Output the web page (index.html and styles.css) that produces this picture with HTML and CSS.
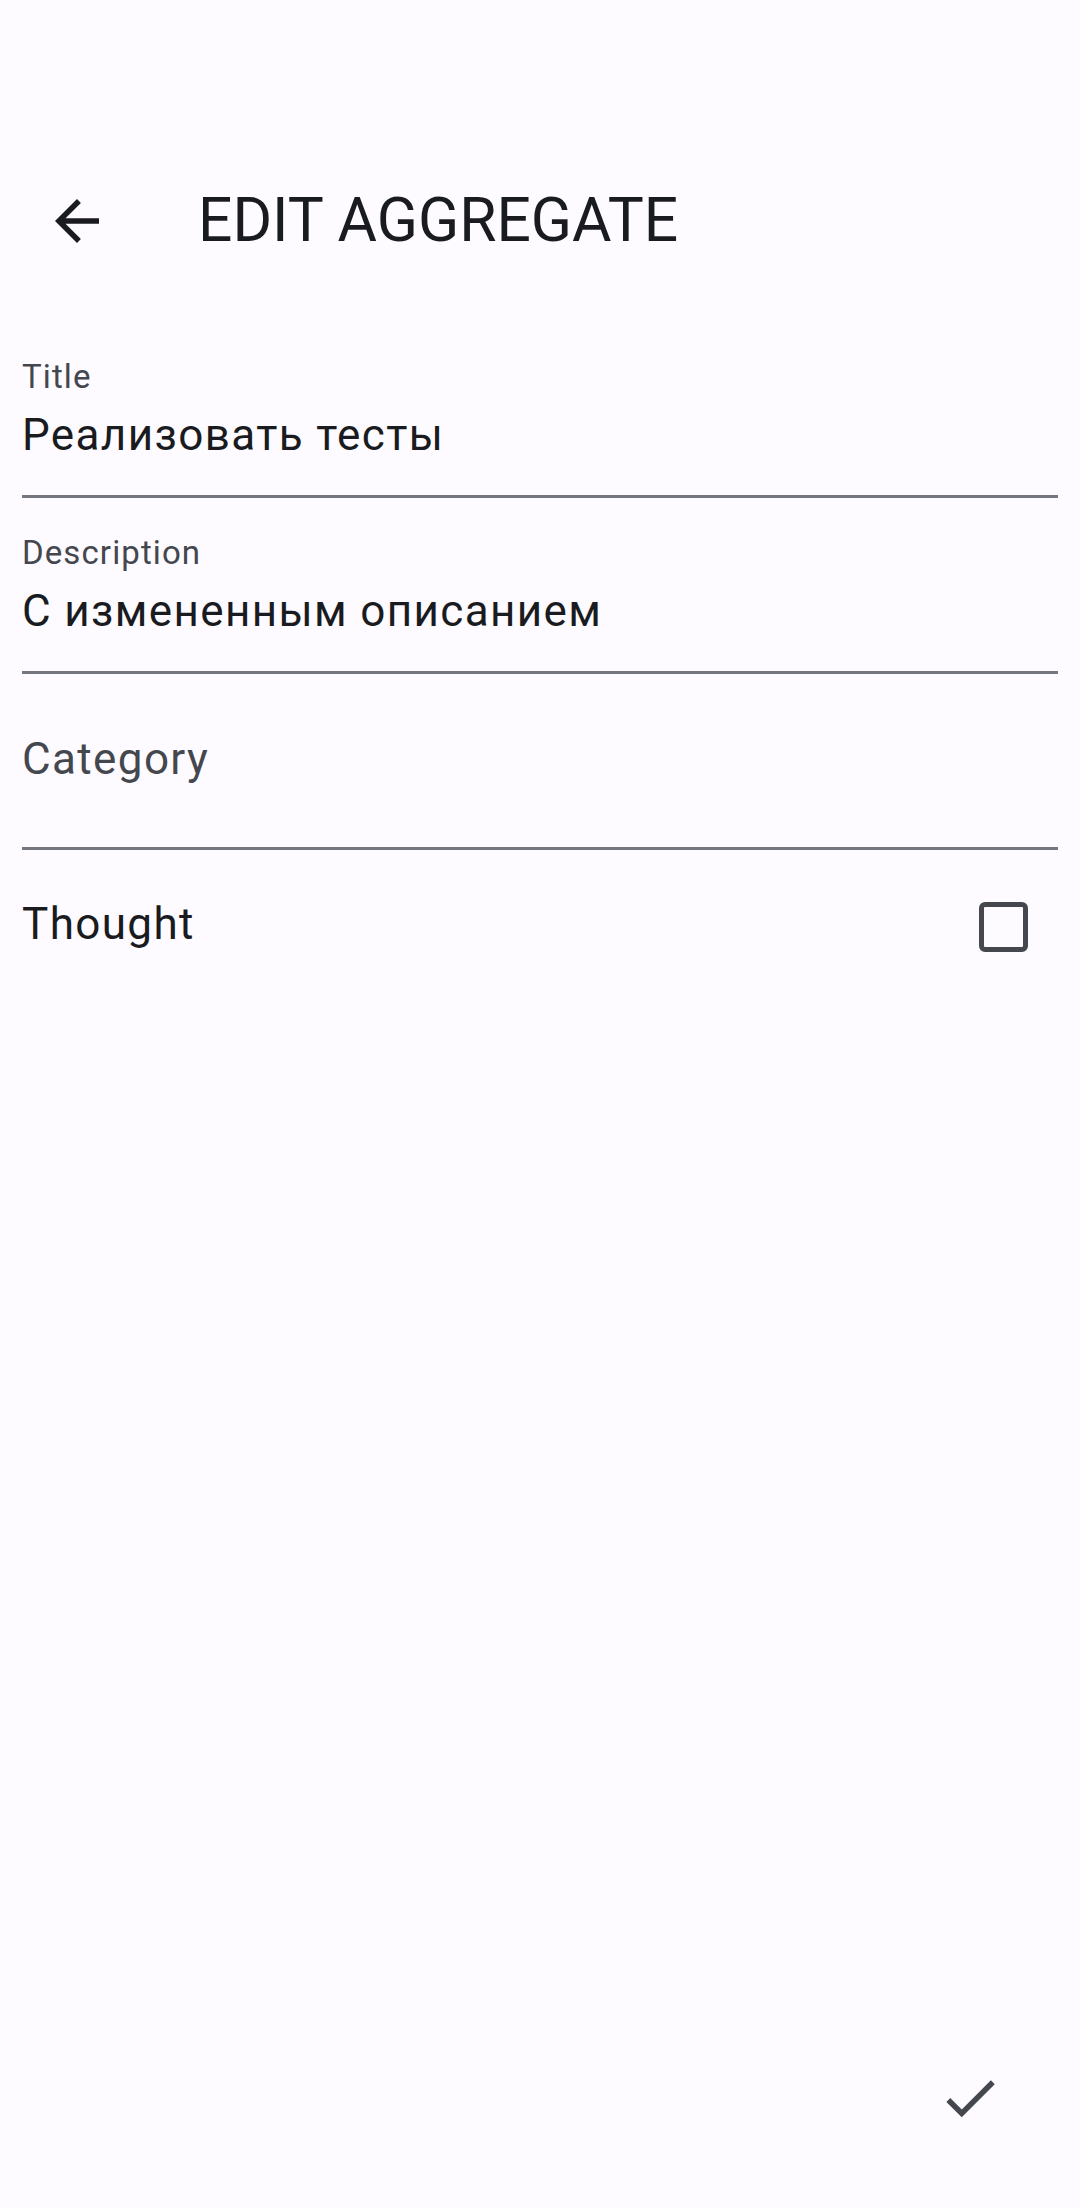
FILE: index.html
```html
<!DOCTYPE html>
<html lang="ru">
<head>
<meta charset="utf-8">
<title>Edit aggregate</title>
<link rel="stylesheet" href="styles.css">
</head>
<body>
<div class="screen">
  <div class="status-space"></div>
  <header class="app-bar">
    <span class="nav-icon">
      <svg viewBox="0 0 24 24" width="66" height="66"><path fill="#1A1B20" d="M20 11H7.83l5.59-5.59L12 4l-8 8 8 8 1.41-1.41L7.83 13H20v-2z"/></svg>
    </span>
    <h1 class="app-title">EDIT AGGREGATE</h1>
  </header>
  <main class="form">
    <div class="field">
      <div class="field-label">Title</div>
      <div class="field-value">Реализовать тесты</div>
      <div class="field-line"></div>
    </div>
    <div class="field">
      <div class="field-label">Description</div>
      <div class="field-value">С измененным описанием</div>
      <div class="field-line"></div>
    </div>
    <div class="field">
      <div class="field-placeholder">Category</div>
      <div class="field-line"></div>
    </div>
    <div class="check-row">
      <span class="check-text">Thought</span>
      <span class="checkbox"></span>
    </div>
  </main>
  <div class="spacer"></div>
  <footer class="footer">
    <span class="done-icon">
      <svg viewBox="0 0 24 24" width="66" height="66"><path fill="#44474E" d="M9 16.17L4.83 12l-1.42 1.41L9 19 21 7l-1.41-1.41z"/></svg>
    </span>
  </footer>
</div>
</body>
</html>
```

FILE: styles.css
```css
html, body {
  margin: 0;
  padding: 0;
  background: #FDFBFF;
}
body {
  font-family: Roboto, "Noto Sans", sans-serif;
  color: #1A1B20;
}
.screen {
  width: 1080px;
  height: 2208px;
  display: flex;
  flex-direction: column;
  overflow: hidden;
}
.status-space {
  height: 133px;
  flex: none;
}
.app-bar {
  height: 176px;
  flex: none;
  display: flex;
  align-items: center;
  padding-left: 44px;
}
.nav-icon {
  width: 66px;
  height: 66px;
  display: block;
}
.nav-icon svg {
  display: block;
}
.app-title {
  margin: 0 0 0 88px;
  font-size: 60.5px;
  font-weight: 400;
  line-height: 76px;
  letter-spacing: 0;
  color: #1A1B20;
}
.form {
  padding: 35px 22px 0;
  display: flex;
  flex-direction: column;
  gap: 22px;
}
.field {
  height: 154px;
  display: flex;
  flex-direction: column;
}
.field-label {
  padding-top: 11px;
  font-size: 33px;
  line-height: 44px;
  letter-spacing: 1.1px;
  color: #44474E;
}
.field-value {
  margin-top: 6px;
  font-size: 44px;
  line-height: 60px;
  letter-spacing: 1.375px;
  color: #1A1B20;
}
.field-placeholder {
  margin-top: 33px;
  font-size: 44px;
  line-height: 60px;
  letter-spacing: 1.375px;
  color: #44474E;
}
.field-line {
  margin-top: auto;
  height: 3px;
  background: #74777F;
}
.check-row {
  margin-top: -11px;
  height: 132px;
  display: flex;
  align-items: center;
  justify-content: space-between;
}
.check-text {
  font-size: 44px;
  line-height: 60px;
  letter-spacing: 1.375px;
  margin-bottom: 6px;
  color: #1A1B20;
}
.checkbox {
  width: 49.5px;
  height: 49.5px;
  box-sizing: border-box;
  border: 5.5px solid #44474E;
  border-radius: 6px;
  margin-right: 30px;
}
.spacer {
  flex: 1;
}
.footer {
  display: flex;
  justify-content: flex-end;
  padding: 0 77px 77px 0;
}
.done-icon {
  width: 66px;
  height: 66px;
  display: block;
}
.done-icon svg {
  display: block;
}
```
